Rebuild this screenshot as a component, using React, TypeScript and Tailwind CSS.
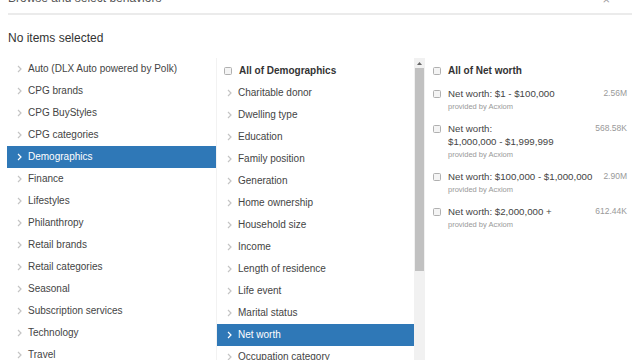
import React from "react";

const col1 = [
  "Auto (DLX Auto powered by Polk)",
  "CPG brands",
  "CPG BuyStyles",
  "CPG categories",
  "Demographics",
  "Finance",
  "Lifestyles",
  "Philanthropy",
  "Retail brands",
  "Retail categories",
  "Seasonal",
  "Subscription services",
  "Technology",
  "Travel",
];

const col2 = [
  "Charitable donor",
  "Dwelling type",
  "Education",
  "Family position",
  "Generation",
  "Home ownership",
  "Household size",
  "Income",
  "Length of residence",
  "Life event",
  "Marital status",
  "Net worth",
  "Occupation category",
];

const col3 = [
  { lines: ["Net worth: $1 - $100,000"], v: "2.56M" },
  { lines: ["Net worth:", "$1,000,000 - $1,999,999"], v: "568.58K" },
  { lines: ["Net worth: $100,000 - $1,000,000"], v: "2.90M" },
  { lines: ["Net worth: $2,000,000 +"], v: "612.44K" },
];

function Chevron({ white }: { white?: boolean }) {
  return (
    <svg width="5" height="8" viewBox="0 0 5 8" className="shrink-0">
      <path d="M1 1 L4 4 L1 7" fill="none" stroke={white ? "#ffffff" : "#c4c4c4"} strokeWidth="1.2" />
    </svg>
  );
}

function Box() {
  return <div className="w-[8px] h-[8px] shrink-0 rounded-[1.5px] border border-[#b0b0b0] bg-[#f4f4f4]" />;
}

function Row({ label, sel, left }: { label: string; sel?: boolean; left: string }) {
  return (
    <div
      className={`flex items-center h-[22px] ${left} ${sel ? "bg-[#2f78b7] text-white" : "text-[#444]"}`}
    >
      <Chevron white={sel} />
      <span className="ml-[6px] text-[10px] leading-[22px] whitespace-nowrap">{label}</span>
    </div>
  );
}

export default function App() {
  return (
    <div
      className="w-[640px] h-[360px] overflow-hidden bg-white relative"
      style={{ fontFamily: '"Liberation Sans", Arial, sans-serif' }}
    >
      <div className="h-[13px] relative px-[8px] overflow-visible">
        <div className="relative top-[-8px] text-[12px] leading-[12px] text-[#555]">Browse and select behaviors</div>
        <div className="absolute right-[30px] top-[-6px] text-[13px] leading-[12px] text-[#999]">×</div>
      </div>
      <div className="mx-[8px] h-[2px] bg-[#ebebeb]" />
      <div className="px-[8px] pt-[16px] h-[43px] text-[12px] leading-[14px] text-[#333]">No items selected</div>
      <div className="flex h-[303px] pl-[7px]">
        <div className="w-[209px] shrink-0">
          {col1.map((l) => (
            <Row key={l} label={l} sel={l === "Demographics"} left="pl-[10px]" />
          ))}
        </div>
        <div className="w-[198px] shrink-0 border-l border-[#f2f2f2] pt-px">
          <div className="flex items-center h-[23px] pl-[7px]">
            <Box />
            <span className="ml-[7px] text-[10px] font-bold text-[#333]">All of Demographics</span>
          </div>
          {col2.map((l) => (
            <Row key={l} label={l} sel={l === "Net worth"} left="pl-[10px]" />
          ))}
        </div>
        <div className="w-[11px] shrink-0 bg-[#f1f1f1] flex flex-col items-center">
          <div className="h-[10px] flex items-center justify-center">
            <svg width="5" height="3" viewBox="0 0 5 3">
              <path d="M0 3 L2.5 0 L5 3 Z" fill="#666" />
            </svg>
          </div>
          <div className="w-[9px] h-[203px] bg-[#c1c1c1]" />
        </div>
        <div className="w-[206px] shrink-0 pt-px pl-[8px] pr-[4px]">
          <div className="flex items-center h-[23px]">
            <Box />
            <span className="ml-[7px] text-[10px] font-bold text-[#333]">All of Net worth</span>
          </div>
          <div className="pt-[1px]">
            {col3.map((it, i) => (
              <div key={i} className="flex py-[4px]">
                <div className="pt-[2.5px]">
                  <Box />
                </div>
                <div className="ml-[7px] flex-1">
                  {it.lines.map((t) => (
                    <div key={t} className="text-[9.7px] leading-[13px] text-[#444] whitespace-nowrap">
                      {t}
                    </div>
                  ))}
                  <div className="text-[7.5px] leading-[14px] text-[#999]">provided by Acxiom</div>
                </div>
                <div className="text-[8.5px] leading-[13px] text-[#999] pl-[4px]">{it.v}</div>
              </div>
            ))}
          </div>
        </div>
      </div>
    </div>
  );
}
